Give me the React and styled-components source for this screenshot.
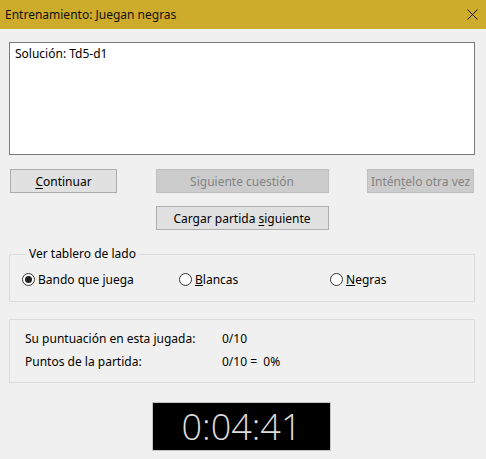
import React from "react";
import styled, { createGlobalStyle } from "styled-components";

const Global = createGlobalStyle`
  html, body { margin: 0; padding: 0; background: #f0f0f0; }
  body { font-family: "Noto Sans", "Open Sans", sans-serif; font-size: 12px; color: #000; }
`;

const Window = styled.div`
  width: 486px;
  height: 459px;
  background: #f0f0f0;
  display: flex;
  flex-direction: column;
  overflow: hidden;
`;

const TitleBar = styled.div`
  height: 29px;
  background: #cdab2b;
  display: flex;
  align-items: center;
  justify-content: space-between;
  padding: 0 8px 0 5px;
  font-size: 12px;
  color: #111;
`;

const Close = styled.svg`
  width: 11px;
  height: 11px;
`;

const Body = styled.div`
  padding: 13px 11px 0 9px;
  display: flex;
  flex-direction: column;
`;

const Output = styled.div`
  border: 1px solid #7a7a7a;
  background: #fff;
  padding: 2px 5px;
  box-sizing: border-box;
  height: 113px;
  font-size: 12px;
`;

const ButtonGrid = styled.div`
  display: grid;
  grid-template-columns: 107px 173px 107px;
  justify-content: space-between;
  padding: 0 1px 0 1px;
  margin-top: 14px;
  row-gap: 13px;
`;

const Button = styled.button`
  height: 24px;
  font-family: inherit;
  font-size: 12px;
  padding: 0;
  border: 1px solid ${(p) => (p.disabled ? "#bfbfbf" : "#adadad")};
  background: ${(p) => (p.disabled ? "#cccccc" : "#e1e1e1")};
  color: ${(p) => (p.disabled ? "#838383" : "#000")};
  grid-column: ${(p) => p.col || "auto"};
  u { text-decoration: underline; text-underline-offset: 2px; }
`;

const Group = styled.fieldset`
  margin: 16px 0 0 0;
  padding: 9px 0 0 12px;
  border: 1px solid #dcdcdc;
  height: 56px;
  box-sizing: border-box;
  display: grid;
  grid-template-columns: 157px 151px 1fr;
  align-items: center;
  align-content: start;
  min-width: 0;
  legend {
    padding: 0 2px;
    margin-left: 5px;
    font-size: 12px;
    line-height: 16px;
  }
`;

const Radio = styled.label`
  display: flex;
  align-items: center;
  gap: 3px;
  font-size: 12px;
  height: 16px;
`;

const Circle = styled.span`
  width: 11px;
  height: 11px;
  border: 1px solid #333;
  border-radius: 50%;
  background: #fff;
  display: inline-flex;
  align-items: center;
  justify-content: center;
  &::after {
    content: "";
    width: 7px;
    height: 7px;
    border-radius: 50%;
    background: ${(p) => (p.checked ? "#222" : "transparent")};
  }
`;

const Score = styled.div`
  margin-top: 17px;
  height: 64px;
  box-sizing: border-box;
  border: 1px solid #dcdcdc;
  padding: 11px 0 0 15px;
  display: grid;
  grid-template-columns: 197px 1fr;
  grid-auto-rows: 23px;
  align-items: start;
  font-size: 12px;
  line-height: 16px;
  white-space: pre;
`;

const TimerRow = styled.div`
  display: flex;
  justify-content: flex-start;
  padding-left: 143px;
  margin-top: 19px;
`;

const Timer = styled.div`
  width: 179px;
  height: 49px;
  box-sizing: border-box;
  background: #000;
  border: 1px solid #c4c4c4;
  color: #dcdcdc;
  font-family: "Open Sans", "Noto Sans", sans-serif;
  font-weight: 300;
  font-size: 36px;
  display: flex;
  align-items: center;
  justify-content: center;
  line-height: 1;
`;

export default function App() {
  return (
    <>
      <Global />
      <Window>
        <TitleBar>
          <span>Entrenamiento: Juegan negras</span>
          <Close viewBox="0 0 11 11">
            <path d="M0.5 0.5L10.5 10.5M10.5 0.5L0.5 10.5" stroke="#111" strokeWidth="1" />
          </Close>
        </TitleBar>
        <Body>
          <Output>Solución: Td5-d1</Output>
          <ButtonGrid>
            <Button><u>C</u>ontinuar</Button>
            <Button disabled>Siguiente cuestión</Button>
            <Button disabled>Intén<u>t</u>elo otra vez</Button>
            <Button col="2">Cargar partida <u>s</u>iguiente</Button>
          </ButtonGrid>
          <Group>
            <legend>Ver tablero de lado</legend>
            <Radio><Circle checked />Bando que juega</Radio>
            <Radio><Circle /><span><u>B</u>lancas</span></Radio>
            <Radio><Circle /><span><u>N</u>egras</span></Radio>
          </Group>
          <Score>
            <span>Su puntuación en esta jugada:</span>
            <span>0/10</span>
            <span>Puntos de la partida:</span>
            <span>0/10 =  0%</span>
          </Score>
          <TimerRow>
            <Timer>0:04:41</Timer>
          </TimerRow>
        </Body>
      </Window>
    </>
  );
}
